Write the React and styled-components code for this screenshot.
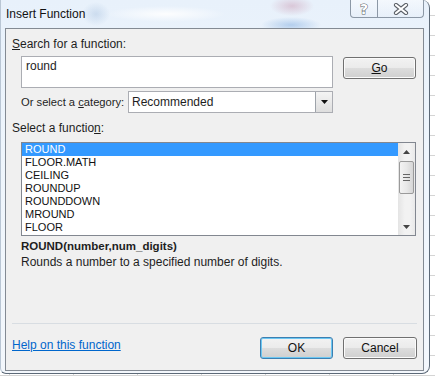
import React from "react";
import styled, { createGlobalStyle } from "styled-components";

const GlobalStyle = createGlobalStyle`
  html, body { margin: 0; padding: 0; }
  body {
    width: 435px;
    height: 376px;
    overflow: hidden;
    font-family: "Liberation Sans", Arial, sans-serif;
    color: #1e1e1e;
    background-color: #ffffff;
    background-image:
      linear-gradient(90deg, #d4d4d4 1px, transparent 1px),
      linear-gradient(180deg, #d4d4d4 1px, transparent 1px);
    background-size: 64px 20px;
    background-position: 9px 15px;
  }
`;

const functions = ["ROUND", "FLOOR.MATH", "CEILING", "ROUNDUP", "ROUNDDOWN", "MROUND", "FLOOR"];

export default function App() {
  return (
    <>
      <GlobalStyle />
      <Window>
        <TitleBar>
          <Title>Insert Function</Title>
          <Caption>
            <CaptionButton $w={28}>
              <HelpGlyph>?</HelpGlyph>
            </CaptionButton>
            <CaptionButton $w={46} $last>
              <svg width="16" height="12" viewBox="0 0 16 12">
                <path d="M3 2 L13 10 M13 2 L3 10" stroke="#5a5f66" strokeWidth="4.2" strokeLinecap="round" />
                <path d="M3 2 L13 10 M13 2 L3 10" stroke="#ffffff" strokeWidth="2.2" strokeLinecap="round" />
              </svg>
            </CaptionButton>
          </Caption>
        </TitleBar>

        <Panel>
          <Label $top={8}>
            <u>S</u>earch for a function:
          </Label>
          <SearchRow>
            <SearchBox>round</SearchBox>
            <Button $w={73} $h={22} style={{ marginTop: 1 }}>
              <u>G</u>o
            </Button>
          </SearchRow>

          <CategoryRow>
            <CategoryLabel>
              Or select a <u>c</u>ategory:
            </CategoryLabel>
            <Select>
              <span>Recommended</span>
              <DropButton>
                <svg width="7" height="4" viewBox="0 0 7 4">
                  <path d="M0 0 H7 L3.5 4 Z" fill="#111" />
                </svg>
              </DropButton>
            </Select>
          </CategoryRow>

          <Label $top={8}>
            Select a functio<u>n</u>:
          </Label>
          <ListBox>
            <Rows>
              {functions.map((f, i) => (
                <Row key={f} $selected={i === 0}>
                  {f}
                </Row>
              ))}
            </Rows>
            <ScrollBar>
              <ArrowCell>
                <svg width="7" height="4" viewBox="0 0 7 4">
                  <path d="M0 4 H7 L3.5 0 Z" fill="#444" />
                </svg>
              </ArrowCell>
              <Track>
                <Thumb>
                  <svg width="7" height="7" viewBox="0 0 7 7">
                    <path d="M0 0.5 H7 M0 3.5 H7 M0 6.5 H7" stroke="#666" strokeWidth="1" />
                  </svg>
                </Thumb>
              </Track>
              <ArrowCell>
                <svg width="7" height="4" viewBox="0 0 7 4">
                  <path d="M0 0 H7 L3.5 4 Z" fill="#444" />
                </svg>
              </ArrowCell>
            </ScrollBar>
          </ListBox>

          <Signature>ROUND(number,num_digits)</Signature>
          <Description>Rounds a number to a specified number of digits.</Description>

          <Separator />
          <Footer>
            <HelpLink href="#">Help on this function</HelpLink>
            <Buttons>
              <Button $w={73} $h={22} $default>
                OK
              </Button>
              <Button $w={74} $h={22}>
                Cancel
              </Button>
            </Buttons>
          </Footer>
        </Panel>
      </Window>
    </>
  );
}

const Window = styled.div`
  box-sizing: border-box;
  width: 430px;
  height: 374px;
  display: flex;
  flex-direction: column;
  padding: 0 5px 2px 4px;
  border-right: 1px solid #5d6a78;
  border-bottom: 1px solid #5d6a78;
  border-left: 1px solid #b9c6d4;
  border-radius: 0 8px 8px 6px;
  background:
    radial-gradient(ellipse 22px 10px at 291px 6px, rgba(190, 120, 150, 0.35), transparent),
    radial-gradient(ellipse 30px 8px at 290px 25px, rgba(80, 140, 210, 0.35), transparent),
    radial-gradient(ellipse 14px 12px at 95px 14px, rgba(150, 180, 215, 0.35), transparent),
    radial-gradient(ellipse 60px 8px at 165px 14px, rgba(255, 255, 255, 0.9), transparent),
    linear-gradient(180deg, #e8f1fb 0%, #eef5fc 40%, #f3f7fc 100%);
`;

const TitleBar = styled.div`
  height: 28px;
  display: flex;
  justify-content: space-between;
  flex-shrink: 0;
`;

const Title = styled.div`
  font-size: 12px;
  line-height: 28px;
  padding-left: 1px;
  color: #111;
`;

const Caption = styled.div`
  display: flex;
  align-self: flex-start;
  height: 18px;
`;

const CaptionButton = styled.div`
  box-sizing: border-box;
  width: ${(p) => p.$w}px;
  height: 18px;
  display: flex;
  align-items: center;
  justify-content: center;
  border: 1px solid #8c98a6;
  border-top: none;
  border-left: ${(p) => (p.$last ? "none" : "1px solid #8c98a6")};
  border-radius: ${(p) => (p.$last ? "0 0 4px 0" : "0 0 0 4px")};
  background: linear-gradient(180deg, rgba(255, 255, 255, 0.5), rgba(230, 238, 248, 0.5));
`;

const HelpGlyph = styled.span`
  font-family: "DejaVu Sans", sans-serif;
  font-weight: bold;
  font-size: 14px;
  line-height: 14px;
  color: #ffffff;
  -webkit-text-stroke: 1px #5a5f66;
  paint-order: stroke fill;
`;

const Panel = styled.div`
  flex: 1;
  display: flex;
  flex-direction: column;
  padding: 0 6px;
  border: 1px solid #838a93;
  background: #f0f0f0;
`;

const Label = styled.div`
  margin-top: ${(p) => p.$top}px;
  font-size: 12px;
  line-height: 14px;
`;

const SearchRow = styled.div`
  display: flex;
  align-items: flex-start;
  gap: 10px;
  margin: 5px 0 0 9px;
`;

const SearchBox = styled.div`
  box-sizing: border-box;
  width: 312px;
  height: 32px;
  padding: 2px 4px;
  font-size: 12px;
  line-height: 14px;
  background: #fff;
  border: 1px solid #abadb3;
`;

const CategoryRow = styled.div`
  display: flex;
  align-items: center;
  margin: 3px 0 0 9px;
`;

const CategoryLabel = styled.div`
  width: 107px;
  flex-shrink: 0;
  white-space: nowrap;
  font-size: 11.2px;
`;

const Select = styled.div`
  box-sizing: border-box;
  width: 205px;
  height: 22px;
  display: flex;
  align-items: center;
  justify-content: space-between;
  padding-left: 3px;
  font-size: 12px;
  background: #fff;
  border: 1px solid #abadb3;
`;

const DropButton = styled.div`
  box-sizing: border-box;
  width: 17px;
  height: 20px;
  display: flex;
  align-items: center;
  justify-content: center;
  border-left: 1px solid #9ea3aa;
  background: linear-gradient(180deg, #f4f4f4, #dedede);
`;

const ListBox = styled.div`
  box-sizing: border-box;
  width: 395px;
  height: 94px;
  margin: 7px 0 0 9px;
  display: flex;
  background: #fff;
  border: 1px solid #828790;
`;

const Rows = styled.div`
  flex: 1;
  display: flex;
  flex-direction: column;
`;

const Row = styled.div`
  height: 13px;
  line-height: 13px;
  padding-left: 3px;
  font-size: 11px;
  color: ${(p) => (p.$selected ? "#fff" : "#111")};
  background: ${(p) => (p.$selected ? "#3399ff" : "transparent")};
`;

const ScrollBar = styled.div`
  width: 17px;
  display: flex;
  flex-direction: column;
  background: linear-gradient(90deg, #e4e4e4, #f2f2f2 40%, #f2f2f2 70%, #e9e9e9);
`;

const ArrowCell = styled.div`
  height: 17px;
  display: flex;
  align-items: center;
  justify-content: center;
`;

const Track = styled.div`
  flex: 1;
  padding-top: 1px;
`;

const Thumb = styled.div`
  box-sizing: border-box;
  width: 15px;
  height: 33px;
  margin-left: 1px;
  display: flex;
  align-items: center;
  justify-content: center;
  border: 1px solid #9a9a9a;
  border-radius: 2px;
  background: linear-gradient(90deg, #f3f3f3, #e8e8e8 50%, #d6d6d6);
`;

const Signature = styled.div`
  margin-top: 2px;
  font-size: 11.5px;
  font-weight: bold;
  line-height: 16px;
  padding-left: 9px;
`;

const Description = styled.div`
  font-size: 12px;
  line-height: 16px;
  padding-left: 9px;
`;

const Separator = styled.div`
  margin-top: auto;
  height: 1px;
  background: #d8dde2;
`;

const Footer = styled.div`
  display: flex;
  justify-content: space-between;
  align-items: flex-start;
  margin: 13px 0 11px;
`;

const HelpLink = styled.a`
  font-size: 12px;
  line-height: 16px;
  color: #0066cc;
  text-decoration: underline;
`;

const Buttons = styled.div`
  display: flex;
  gap: 10px;
`;

const Button = styled.div`
  box-sizing: border-box;
  width: ${(p) => p.$w}px;
  height: ${(p) => p.$h}px;
  display: flex;
  align-items: center;
  justify-content: center;
  font-size: 12px;
  color: #111;
  border: 1px solid ${(p) => (p.$default ? "#3c7fb1" : "#707070")};
  border-radius: 3px;
  box-shadow: inset 0 0 0 1px ${(p) => (p.$default ? "#6cc7f2" : "#fbfbfb")};
  background: linear-gradient(180deg, #f2f2f2 0%, #ebebeb 50%, #dddddd 51%, #cfcfcf 100%);
`;
